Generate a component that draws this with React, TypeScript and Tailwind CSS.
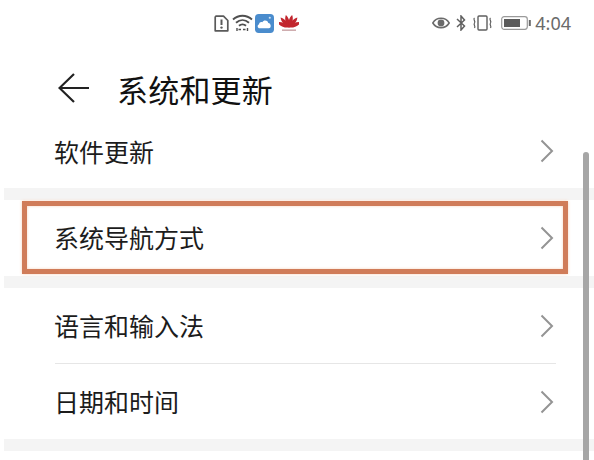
import React from "react";

const cjk = { fontFamily: '"Noto Sans CJK SC", "Noto Sans", sans-serif' };

function Chevron() {
  return (
    <svg width="14" height="24" viewBox="0 0 14 24" fill="none" className="shrink-0">
      <path d="M1.5 1.5 L12 12 L1.5 22.5" stroke="#949494" strokeWidth="2" />
    </svg>
  );
}

function Row({ label, className = "" }: { label: string; className?: string }) {
  return (
    <div className={`flex items-center justify-between pl-[54px] pr-[40px] ${className}`}>
      <span className="text-[25px] leading-none text-[#1c1c1c]" style={cjk}>{label}</span>
      <Chevron />
    </div>
  );
}

function Band() {
  return <div className="ml-1 h-3 bg-[#f4f4f4]" />;
}

function Huawei() {
  const petals = [-66, -40, -14, 14, 40, 66];
  return (
    <svg width="20" height="18" viewBox="0 0 20 18">
      {petals.map((a) => (
        <path key={a} d="M10 13.5 C7.2 9 7.8 3.5 10 0.5 C12.2 3.5 12.8 9 10 13.5 Z" fill="#c2262e" transform={`rotate(${a} 10 13.5)`} />
      ))}
      <rect x="3" y="15.5" width="14" height="1.3" fill="#c49a9c" />
    </svg>
  );
}

export default function App() {
  return (
    <div className="relative h-[460px] w-[594px] overflow-hidden bg-white">
      <div className="flex h-[46px] items-center pl-[214px] pr-[23px]">
        <div className="flex items-center">
          <svg width="15" height="17" viewBox="0 0 15 17" fill="none">
            <path d="M2 1.2 H9.5 L13.8 5.5 V15.8 H1.2 V2 Z" stroke="#5a5a5a" strokeWidth="1.7" strokeLinejoin="round" />
            <path d="M7.5 4.5 V10" stroke="#5a5a5a" strokeWidth="2" />
            <circle cx="7.5" cy="12.6" r="1.2" fill="#5a5a5a" />
          </svg>
          <svg width="21" height="18" viewBox="0 0 21 18" fill="none" className="ml-[3px]">
            <path d="M1 5.5 C6.5 0.5 14.5 0.5 20 5.5" stroke="#4f4f4f" strokeWidth="1.9" />
            <path d="M4 8.8 C8 5.2 13 5.2 17 8.8" stroke="#4f4f4f" strokeWidth="1.9" />
            <path d="M7 11.8 C9 10 12 10 14 11.8" stroke="#4f4f4f" strokeWidth="1.9" />
            <path d="M6.5 15.5 H9 M11 15.5 H13.5 M15.5 14 V17 M5 14 V17" stroke="#4f4f4f" strokeWidth="1.4" />
          </svg>
          <svg width="19" height="19" viewBox="0 0 18 18" className="ml-[2px]">
            <rect width="18" height="18" rx="3.5" fill="#4a8ccd" />
            <path d="M4.5 13.5 C2.3 13.5 1.8 10.6 3.8 9.7 C4 7.7 6 7.1 7 7.9 C8 5.4 12 5.6 12.6 8.5 C15.2 8.5 16 13.5 13 13.5 Z" fill="#fff" />
            <circle cx="14" cy="3.5" r="1" fill="#cfe4f6" />
          </svg>
          <div className="ml-[5px] flex"><Huawei /></div>
        </div>
        <div className="ml-auto flex items-center">
          <svg width="18" height="14" viewBox="0 0 18 14" fill="none">
            <path d="M0.8 7 C4.5 0.8 13.5 0.8 17.2 7 C13.5 13.2 4.5 13.2 0.8 7 Z" stroke="#6a6a6a" strokeWidth="1.5" />
            <circle cx="9" cy="7" r="3.4" fill="#6a6a6a" />
          </svg>
          <svg width="10" height="16" viewBox="0 0 10 16" fill="none" className="ml-[6px]">
            <path d="M1 4 L8.5 11 L5 15 V1 L8.5 5 L1 12" stroke="#5f5f5f" strokeWidth="1.5" />
          </svg>
          <svg width="21" height="16" viewBox="0 0 21 16" fill="none" className="ml-[6px]">
            <rect x="6" y="1" width="9" height="14" rx="1" stroke="#5f5f5f" strokeWidth="1.4" />
            <path d="M2.5 3 C0.5 4.5 4 6 2.5 8 C1 10 4 11 2.5 13 M18.5 3 C16.5 4.5 20 6 18.5 8 C17 10 20 11 18.5 13" stroke="#5f5f5f" strokeWidth="1.2" />
          </svg>
          <svg width="30" height="14" viewBox="0 0 30 14" fill="none" className="ml-[8px]">
            <rect x="0.7" y="0.7" width="25.6" height="12.6" rx="2.5" stroke="#9a9a9a" strokeWidth="1.2" />
            <rect x="3" y="3" width="16" height="8" fill="#5b5b5b" />
            <rect x="27.8" y="4" width="2" height="6" fill="#6a6a6a" />
          </svg>
          <span className="ml-1 text-[18px] leading-none text-[#6a6a6a]" style={{ fontFamily: '"Noto Sans", sans-serif' }}>4:04</span>
        </div>
      </div>

      <div className="flex h-[84px] items-center pl-[58px]">
        <svg width="32" height="32" viewBox="0 0 32 32" fill="none">
          <path d="M16 2 L1.5 16 L16 30 M1.5 16 H31" stroke="#222" strokeWidth="2.2" />
        </svg>
        <span className="ml-[27px] text-[31px] font-normal leading-none tracking-[0.2px] text-[#111]" style={cjk}>系统和更新</span>
      </div>

      <Row label="软件更新" className="h-[58px] pb-[16px]" />
      <Band />
      <div className="relative">
        <Row label="系统导航方式" className="h-[76px] pb-[1px]" />
        <div className="absolute left-[22px] top-[1px] h-[73px] w-[546px] border-[5px] border-[#d07c59] shadow-[0_0_3px_#f7d3bd,inset_0_0_3px_#f7d3bd]" />
      </div>
      <Band />
      <Row label="语言和输入法" className="h-[75px]" />
      <div className="ml-[55px] mr-[38px] h-px bg-[#e6e6e6]" />
      <Row label="日期和时间" className="h-[75px]" />
      <Band />

      <div className="absolute bottom-0 left-[583px] top-[152px] w-[6px] rounded-t-full bg-[#a6a6a6]" />
    </div>
  );
}
